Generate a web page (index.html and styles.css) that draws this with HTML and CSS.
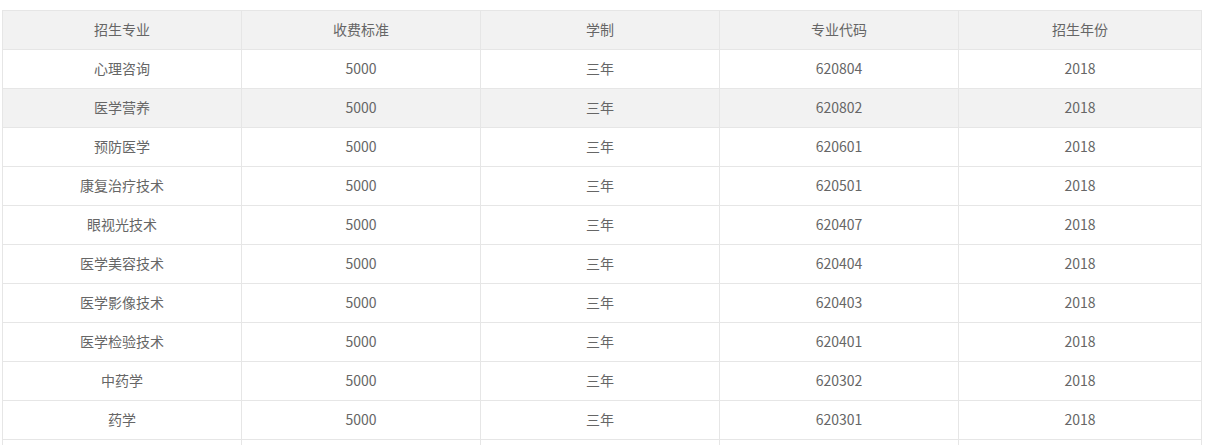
FILE: index.html
```html
<!DOCTYPE html>
<html lang="zh-CN">
<head>
<meta charset="utf-8">
<title>招生专业</title>
<link rel="stylesheet" href="styles.css">
</head>
<body>
<div class="wrap">
<table class="major-table">
<colgroup><col class="c"><col class="c"><col class="c"><col class="c"><col class="last"></colgroup>
<thead>
<tr><th>招生专业</th><th>收费标准</th><th>学制</th><th>专业代码</th><th>招生年份</th></tr>
</thead>
<tbody>
<tr><td>心理咨询</td><td>5000</td><td>三年</td><td>620804</td><td>2018</td></tr>
<tr class="hl"><td>医学营养</td><td>5000</td><td>三年</td><td>620802</td><td>2018</td></tr>
<tr><td>预防医学</td><td>5000</td><td>三年</td><td>620601</td><td>2018</td></tr>
<tr><td>康复治疗技术</td><td>5000</td><td>三年</td><td>620501</td><td>2018</td></tr>
<tr><td>眼视光技术</td><td>5000</td><td>三年</td><td>620407</td><td>2018</td></tr>
<tr><td>医学美容技术</td><td>5000</td><td>三年</td><td>620404</td><td>2018</td></tr>
<tr><td>医学影像技术</td><td>5000</td><td>三年</td><td>620403</td><td>2018</td></tr>
<tr><td>医学检验技术</td><td>5000</td><td>三年</td><td>620401</td><td>2018</td></tr>
<tr><td>中药学</td><td>5000</td><td>三年</td><td>620302</td><td>2018</td></tr>
<tr><td>药学</td><td>5000</td><td>三年</td><td>620301</td><td>2018</td></tr>
<tr><td>&nbsp;</td><td></td><td></td><td></td><td></td></tr>
</tbody>
</table>
</div>
</body>
</html>
```
FILE: styles.css
```css
html, body {
  margin: 0;
  padding: 0;
  background: #fff;
}
.wrap {
  padding: 10px 0 0 2px;
}
.major-table {
  width: 1200px;
  border-collapse: collapse;
  border-spacing: 0;
  table-layout: fixed;
  font-family: "Noto Sans CJK SC", "Noto Sans", sans-serif;
  font-size: 14px;
  color: #666;
  background: #fff;
}
.major-table col.c {
  width: 239px;
}
.major-table th,
.major-table td {
  border: 1px solid #e6e6e6;
  padding: 8px 0 10px;
  line-height: 20px;
  height: 20px;
  text-align: center;
  font-weight: normal;
}
.major-table thead tr {
  background: #f2f2f2;
}
.major-table tr.hl {
  background: #f2f2f2;
}
```
